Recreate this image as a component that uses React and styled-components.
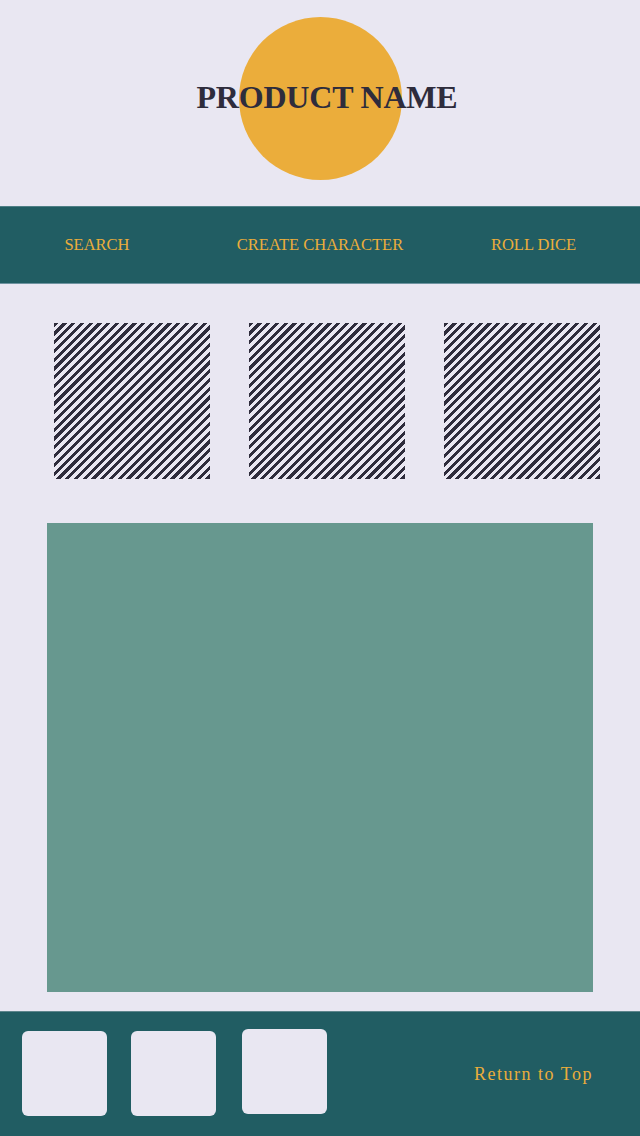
import React from 'react';
import styled, { createGlobalStyle } from 'styled-components';

const COLOR = {
  page: '#e9e7f2',
  ink: '#2e2c3c',
  gold: '#ebad3b',
  teal: '#215d63',
  sage: '#67988f',
};

const SERIF = '"Liberation Serif", "DejaVu Serif", serif';

const GlobalStyle = createGlobalStyle`
  html, body {
    margin: 0;
    padding: 0;
    background: ${COLOR.page};
    font-family: ${SERIF};
  }
`;

const Page = styled.div`
  width: 640px;
  min-height: 1136px;
  background: ${COLOR.page};
  display: flex;
  flex-direction: column;
`;

const Header = styled.header`
  height: 206px;
  box-sizing: border-box;
  padding-top: 17px;
  display: flex;
  justify-content: center;
`;

const Circle = styled.div`
  width: 163px;
  height: 163px;
  border-radius: 50%;
  background: ${COLOR.gold};
  display: flex;
  align-items: center;
  justify-content: center;
`;

const Title = styled.h1`
  margin: 0;
  white-space: nowrap;
  font-family: ${SERIF};
  font-size: 32px;
  font-weight: 700;
  letter-spacing: -0.2px;
  color: ${COLOR.ink};
  line-height: 1;
  padding: 0 0 3px 14px;
`;

const Nav = styled.nav`
  height: 78px;
  background: ${COLOR.teal};
  border-top: 1px solid #4e7f86;
  border-bottom: 1px solid #6e93a0;
  box-sizing: border-box;
  display: grid;
  grid-template-columns: 194px 252px 175px;
  align-items: center;
  justify-items: center;
`;

const NavLink = styled.a`
  font-family: ${SERIF};
  font-size: 16.5px;
  color: ${COLOR.gold};
  text-decoration: none;
  text-transform: uppercase;
  white-space: nowrap;
`;

const Tiles = styled.section`
  display: flex;
  gap: 39px;
  padding: 39px 0 0 54px;
`;

const Tile = styled.div`
  width: 156px;
  height: 156px;
  background: repeating-linear-gradient(
    135deg,
    ${COLOR.ink} 0px,
    ${COLOR.ink} 3px,
    ${COLOR.page} 3px,
    ${COLOR.page} 6.2px
  );
`;

const Feature = styled.section`
  margin: 44px 47px 0;
  height: 469px;
  background: ${COLOR.sage};
`;

const Footer = styled.footer`
  margin-top: 19px;
  height: 125px;
  background: ${COLOR.teal};
  border-top: 1px solid #5d858c;
  box-sizing: border-box;
  display: flex;
  align-items: flex-start;
  padding: 19px 47px 0 22px;
`;

const Card = styled.div`
  width: 85px;
  height: 85px;
  border-radius: 6px;
  background: ${COLOR.page};
  margin-left: ${(p) => p.offset || 0}px;
  margin-top: ${(p) => p.lift || 0}px;
`;

const TopLink = styled.a`
  margin-left: auto;
  margin-top: 33px;
  line-height: 20px;
  font-family: ${SERIF};
  font-size: 18px;
  letter-spacing: 1.5px;
  color: ${COLOR.gold};
  text-decoration: none;
`;

const links = ['Search', 'Create Character', 'Roll Dice'];

const App = () => (
  <Page>
    <GlobalStyle />
    <Header>
      <Circle>
        <Title>PRODUCT NAME</Title>
      </Circle>
    </Header>
    <Nav>
      {links.map((label) => (
        <NavLink key={label} href="#">
          {label}
        </NavLink>
      ))}
    </Nav>
    <Tiles>
      <Tile />
      <Tile />
      <Tile />
    </Tiles>
    <Feature />
    <Footer>
      <Card />
      <Card offset={24} />
      <Card offset={26} lift={-2} />
      <TopLink href="#">Return to Top</TopLink>
    </Footer>
  </Page>
);

export default App;
